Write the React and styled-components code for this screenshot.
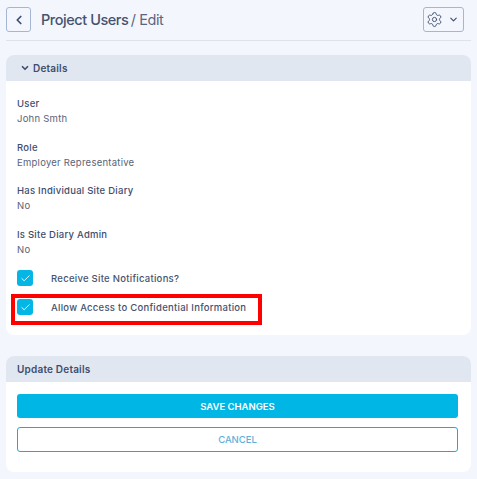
import React from 'react';
import styled, { createGlobalStyle } from 'styled-components';
import { ChevronLeft, ChevronDown, Settings, Check } from 'lucide-react';

const GlobalStyle = createGlobalStyle`
  html, body { margin: 0; padding: 0; background: #f3f6fd; }
  body { font-family: "Inter", "Liberation Sans", sans-serif; }
`;

const Page = styled.div`
  width: 477px;
  height: 479px;
  padding: 7px 6px 0;
  box-sizing: border-box;
  overflow: hidden;
`;

const TopBar = styled.div`
  display: flex;
  align-items: flex-start;
  height: 33px;
  border-bottom: 1px solid #dfe2e8;
  margin-bottom: 14px;
`;

const IconButton = styled.button`
  display: flex;
  align-items: center;
  justify-content: ${({ $push }) => ($push ? 'flex-start' : 'center')};
  gap: 5px;
  width: ${({ $w }) => $w}px;
  height: 25px;
  padding: 0 0 0 ${({ $push }) => ($push ? 2 : 0)}px;
  margin-left: ${({ $push }) => ($push ? 'auto' : '0')};
  margin-right: ${({ $push }) => ($push ? '7px' : '0')};
  background: transparent;
  border: 1px solid #a5b6d3;
  border-radius: 3px;
  color: #3f4d6e;
`;

const Title = styled.h1`
  margin: 3px 0 0 10px;
  font-size: 14.5px;
  line-height: 20px;
  font-weight: 500;
  letter-spacing: -0.45px;
  color: #46536f;
`;

const Crumb = styled.span`
  font-weight: 400;
  color: #5a6680;
  margin-left: -1px;
`;

const Card = styled.section`
  background: #fff;
  border-radius: 8px;
  overflow: hidden;
  margin-bottom: ${({ $gap }) => $gap || 0}px;
`;

const CardHeader = styled.div`
  display: flex;
  align-items: center;
  gap: 3px;
  height: 26px;
  padding: 0 0 1px ${({ $left }) => $left}px;
  box-sizing: border-box;
  background: #e1e7f1;
  font-size: 10px;
  font-weight: 600;
  letter-spacing: 0.2px;
  color: #3f4d6e;
`;

const DetailsBody = styled.div`
  position: relative;
  height: 254px;
  padding: 15px 11px 0;
  box-sizing: border-box;
`;

const Field = styled.div`
  height: 43.5px;
  font-size: 9.5px;
  line-height: 15px;
  letter-spacing: 0.25px;
`;

const Label = styled.div`
  color: #3f4d6e;
  font-weight: 500;
`;

const Value = styled.div`
  color: #5a6378;
`;

const CheckRow = styled.div`
  display: flex;
  align-items: center;
  gap: 18px;
  height: 16px;
  margin-bottom: 13px;
  font-size: 9.5px;
  font-weight: 500;
  letter-spacing: 0.27px;
  color: #46536f;
`;

const Tick = styled.span`
  display: flex;
  align-items: center;
  justify-content: center;
  width: 16px;
  height: 16px;
  border-radius: 3px;
  background: #04b6e6;
  color: #fff;
`;

const Highlight = styled.div`
  position: absolute;
  left: 5px;
  top: 213px;
  width: 251px;
  height: 31px;
  border: 4px solid #fd0000;
  box-sizing: border-box;
`;

const UpdateBody = styled.div`
  display: flex;
  flex-direction: column;
  gap: 9px;
  height: 90px;
  padding: 12px 13px 0 11px;
  box-sizing: border-box;
`;

const Action = styled.button`
  height: ${({ $primary }) => ($primary ? 24 : 25)}px;
  border-radius: 3px;
  font-family: inherit;
  font-size: 9.5px;
  font-weight: ${({ $primary }) => ($primary ? 600 : 500)};
  color: ${({ $primary }) => ($primary ? '#fff' : '#5bb1dc')};
  background: ${({ $primary }) => ($primary ? '#00b6e5' : '#fff')};
  border: ${({ $primary }) => ($primary ? 'none' : '1px solid #1dabd6')};
`;

const details = [
  ['User', 'John Smth'],
  ['Role', 'Employer Representative'],
  ['Has Individual Site Diary', 'No'],
  ['Is Site Diary Admin', 'No'],
];

const checks = ['Receive Site Notifications?', 'Allow Access to Confidential Information'];

export default function App() {
  return (
    <Page>
      <GlobalStyle />
      <TopBar>
        <IconButton $w={25}>
          <ChevronLeft size={14} strokeWidth={3} />
        </IconButton>
        <Title>
          Project Users <Crumb>/ Edit</Crumb>
        </Title>
        <IconButton $w={41} $push>
          <Settings size={17} strokeWidth={1.3} />
          <ChevronDown size={11} strokeWidth={2.5} />
        </IconButton>
      </TopBar>
      <Card $gap={21}>
        <CardHeader $left={14}>
          <ChevronDown size={10} strokeWidth={4} />
          Details
        </CardHeader>
        <DetailsBody>
          {details.map(([label, value]) => (
            <Field key={label}>
              <Label>{label}</Label>
              <Value>{value}</Value>
            </Field>
          ))}
          {checks.map((text) => (
            <CheckRow key={text}>
              <Tick>
                <Check size={11} strokeWidth={2} />
              </Tick>
              {text}
            </CheckRow>
          ))}
          <Highlight />
        </DetailsBody>
      </Card>
      <Card>
        <CardHeader $left={11}>Update Details</CardHeader>
        <UpdateBody>
          <Action $primary>SAVE CHANGES</Action>
          <Action>CANCEL</Action>
        </UpdateBody>
      </Card>
    </Page>
  );
}
